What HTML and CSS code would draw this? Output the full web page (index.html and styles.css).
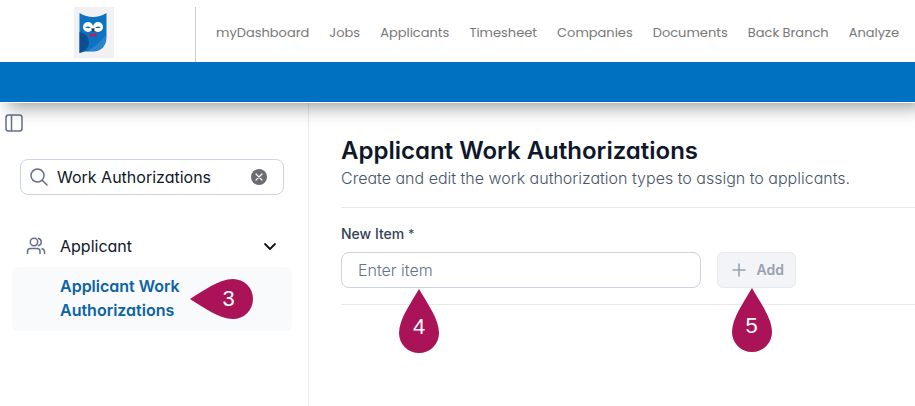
FILE: index.html
```html
<!DOCTYPE html>
<html lang="en">
  <head>
    <meta charset="UTF-8" />
    <meta name="viewport" content="width=device-width, initial-scale=1.0" />
    <title>Applicant Work Authorizations</title>
    <link rel="stylesheet" href="styles.css">
  </head>
  <body>
    <header class="header">
      <div class="top">
        <a href="#" class="logo" aria-label="Home">
          <svg width="40" height="51" viewBox="0 0 40 51">
            <rect width="40" height="51" fill="#f1f1f2" />
            <path d="M5.500 6 Q12 10 19 10 Q26 10 32.500 6 V30 C32.500 39 27 44.500 19 44.500 H11 L5.500 46 Z" fill="#0c72c2" />
            <path d="M14 43.500 Q24 38 32 28 V32 C31 40 26 44 19 44 Z" fill="#2b84cb" />
            <path d="M5.500 25 Q14 27 15 35 Q15 43 5.500 46 Z" fill="#0b4f91" />
            <circle cx="14" cy="20" r="5" fill="#fff" />
            <circle cx="24" cy="20" r="5" fill="#fff" />
            <path d="M11 21 Q14 18 17 21 Z M21 21 Q24 18 27 21 Z" fill="#1d5c99" />
            <path d="M17 21.500 h4 l-2 4 Z" fill="#2f3545" />
            <path d="M15.500 26 l3.500 1.200 l3.500 -1.200 v4 l-3.500 -1.200 l-3.500 1.200 Z" fill="#c2185b" />
          </svg>
        </a>
        <nav class="menu">
          <a href="#">myDashboard</a>
          <a href="#">Jobs</a>
          <a href="#">Applicants</a>
          <a href="#">Timesheet</a>
          <a href="#">Companies</a>
          <a href="#">Documents</a>
          <a href="#">Back Branch</a>
          <a href="#">Analyze</a>
        </nav>
      </div>
      <div class="bar"></div>
    </header>
    <div class="page">
      <aside class="sidebar">
        <button type="button" class="toggle" aria-label="Toggle sidebar">
          <svg width="18" height="18" viewBox="0 0 18 18" fill="none" stroke="#64708a" stroke-width="1.5">
            <rect x="1" y="1" width="16" height="16" rx="2.500" />
            <path d="M6.500 1 V17" />
          </svg>
        </button>
        <div class="search">
          <svg width="18" height="18" viewBox="0 0 18 18" fill="none" stroke="#64708a" stroke-width="1.5" stroke-linecap="round">
            <circle cx="7.500" cy="7.500" r="6.500" />
            <path d="M12.200 12.200 L17 17" />
          </svg>
          <input type="text" aria-label="Search settings" value="Work Authorizations" />
          <button type="button" aria-label="Clear search">
            <svg width="16" height="16" viewBox="0 0 16 16">
              <circle cx="8" cy="8" r="8" fill="#6b6c72" />
              <path d="M5 5 L11 11 M11 5 L5 11" stroke="#fff" stroke-width="1.2" stroke-linecap="round" />
            </svg>
          </button>
        </div>
        <nav class="side_menu">
          <button type="button" class="group" aria-expanded="true">
            <svg width="20" height="20" viewBox="0 0 20 20" fill="none" stroke="#64708a" stroke-width="1.5" stroke-linecap="round">
              <circle cx="8" cy="6" r="3.700" />
              <path d="M1.500 17.500 V15.500 Q1.500 12.500 4.500 12.500 H11 Q14 12.500 14 15.500 V17.500" />
              <path d="M12.500 2.400 A3.700 3.700 0 0 1 12.500 9.600" />
              <path d="M16 12.700 Q18.500 13.200 18.500 16 V17.500" />
            </svg>
            <span>Applicant</span>
            <svg width="14" height="14" viewBox="0 0 14 14" fill="none" stroke="#0f1115" stroke-width="1.8" stroke-linecap="round" stroke-linejoin="round">
              <path d="M2 5 L7 10 L12 5" />
            </svg>
          </button>
          <div class="item">
            <a href="#">Applicant Work Authorizations</a>
            <div class="marker marker_left">
              <svg width="63" height="40" viewBox="0 0 63 40">
                <path d="M0 20 C13 12 29 0 43 0 A20 20 0 0 1 43 40 C29 40 13 28 0 20 Z" />
              </svg>
              <span>3</span>
            </div>
          </div>
        </nav>
      </aside>
      <main class="content">
        <div class="heading">
          <h1>Applicant Work Authorizations</h1>
          <p>Create and edit the work authorization types to assign to applicants.</p>
        </div>
        <form class="new_item">
          <label for="item">New Item <span>*</span></label>
          <div class="row">
            <div class="field">
              <input type="text" id="item" placeholder="Enter item" required />
              <div class="marker marker_input">
                <svg width="40" height="64" viewBox="0 0 40 64">
                  <path d="M20 0 C12 14 0 30 0 44 A20 20 0 0 0 40 44 C40 30 28 14 20 0 Z" />
                </svg>
                <span>4</span>
              </div>
            </div>
            <div class="action">
              <button type="submit" disabled>
                <svg width="14" height="14" viewBox="0 0 14 14" stroke="#98a1b2" stroke-width="1.6" stroke-linecap="round">
                  <path d="M7 1 V13 M1 7 H13" />
                </svg>
                Add
              </button>
              <div class="marker marker_button">
                <svg width="40" height="64" viewBox="0 0 40 64">
                  <path d="M20 0 C12 14 0 30 0 44 A20 20 0 0 0 40 44 C40 30 28 14 20 0 Z" />
                </svg>
                <span>5</span>
              </div>
            </div>
          </div>
        </form>
      </main>
    </div>
  </body>
</html>
```
FILE: styles.css
```css
* {
  margin: 0;
  padding: 0;
  box-sizing: border-box;
}
body {
  min-height: 100vh;
  display: flex;
  flex-direction: column;
  font-family: Inter, sans-serif;
  font-feature-settings: 'cv11';
  font-size: 16px;
  line-height: 24px;
  color: #0f172a;
  background-color: #fff;
}
svg {
  display: block;
  flex-shrink: 0;
}
a {
  text-decoration: none;
}
button {
  font: inherit;
  font-feature-settings: inherit;
  color: inherit;
  background: none;
  border: 0;
}
input {
  font: inherit;
  font-feature-settings: inherit;
  min-width: 0;
  border: 0;
  outline: 0;
  background: none;
}

/* header */
.header {
  position: relative;
  border-bottom: 1px solid #fff;
  box-shadow: 8px 5px 16px rgba(0, 0, 0, 0.36);
}
.top {
  display: flex;
  padding-top: 7px;
  background-color: #fff;
}
.logo {
  width: 196px;
  height: 55px;
  padding-left: 74px;
  flex-shrink: 0;
  border-right: 1px solid #ccc;
}
.menu {
  display: flex;
  gap: 20px;
  padding: 14px 16px 0 20px;
  font-family: Poppins, "Open Sans", sans-serif;
  font-size: 13px;
  white-space: nowrap;
}
.menu a {
  color: #777;
}
.bar {
  height: 40px;
  background-color: #0070c0;
}

.page {
  flex: 1;
  display: flex;
}

/* sidebar */
.sidebar {
  width: 309px;
  flex-shrink: 0;
  padding-top: 11px;
  border-right: 1px solid #e7e9ee;
}
.toggle {
  display: block;
  margin-left: 5px;
}
.search {
  display: flex;
  align-items: center;
  gap: 9px;
  height: 36px;
  margin: 27px 24px 0 20px;
  padding: 0 16px 0 9px;
  border: 1px solid #cfd3e0;
  border-radius: 8px;
}
.search input {
  flex: 1;
  color: #0f172a;
}
.side_menu {
  padding: 32px 16px 0 12px;
}
.group {
  display: flex;
  align-items: center;
  gap: 14px;
  width: 100%;
  height: 38px;
  margin-bottom: 2px;
  padding: 0 15px 0 14px;
  text-align: left;
}
.group span {
  flex: 1;
}
.item {
  position: relative;
  padding: 7px 90px 9px 48px;
  background-color: #f8fafc;
  border-radius: 6px;
}
.item a {
  display: block;
  font-weight: 600;
  color: #0b63a5;
}

/* content */
.content {
  flex: 1;
  min-width: 0;
  padding: 33px 0 0 32px;
}
.heading {
  padding-bottom: 17px;
  border-bottom: 1px solid #e7e9ee;
}
.heading h1 {
  font-size: 24px;
  font-weight: 600;
  line-height: 30px;
}
.heading p {
  font-weight: 300;
  color: #475569;
}
.new_item {
  padding: 16px 0;
  border-bottom: 1px solid #e7e9ee;
}
.new_item label {
  display: flex;
  gap: 4px;
  margin-bottom: 8px;
  font-size: 14px;
  font-weight: 500;
  line-height: 20px;
  color: #334155;
}
.new_item label span {
  font-size: 12px;
  font-weight: 400;
}
.row {
  display: flex;
  gap: 16px;
  padding-right: 119px;
}
.field {
  position: relative;
  flex: 1;
}
.field input {
  display: block;
  width: 100%;
  height: 36px;
  padding: 0 16px;
  border: 1px solid #cfd3e0;
  border-radius: 8px;
}
.field input::placeholder {
  font-weight: 300;
  color: #64748b;
}
.action {
  position: relative;
}
.action button {
  display: flex;
  align-items: center;
  gap: 11px;
  height: 36px;
  padding: 0 11px 0 14px;
  font-size: 14px;
  font-weight: 600;
  color: #98a1b2;
  background-color: #f2f4f7;
  border: 1px solid #e7e9ee;
  border-radius: 6px;
}

/* numbered callouts */
.marker {
  position: absolute;
  font-family: "Liberation Sans", sans-serif;
  font-size: 22px;
  color: #fff;
}
.marker path {
  fill: #ab1358;
}
.marker span {
  position: absolute;
  left: 0;
  width: 100%;
  text-align: center;
}
.marker_left {
  top: 12px;
  left: 178px;
}
.marker_left span {
  top: 8px;
  padding-left: 14px;
}
.marker_input {
  top: 37px;
  left: 58px;
}
.marker_button {
  top: 36px;
  left: 15px;
}
.marker_input span,
.marker_button span {
  top: 26px;
}
```
